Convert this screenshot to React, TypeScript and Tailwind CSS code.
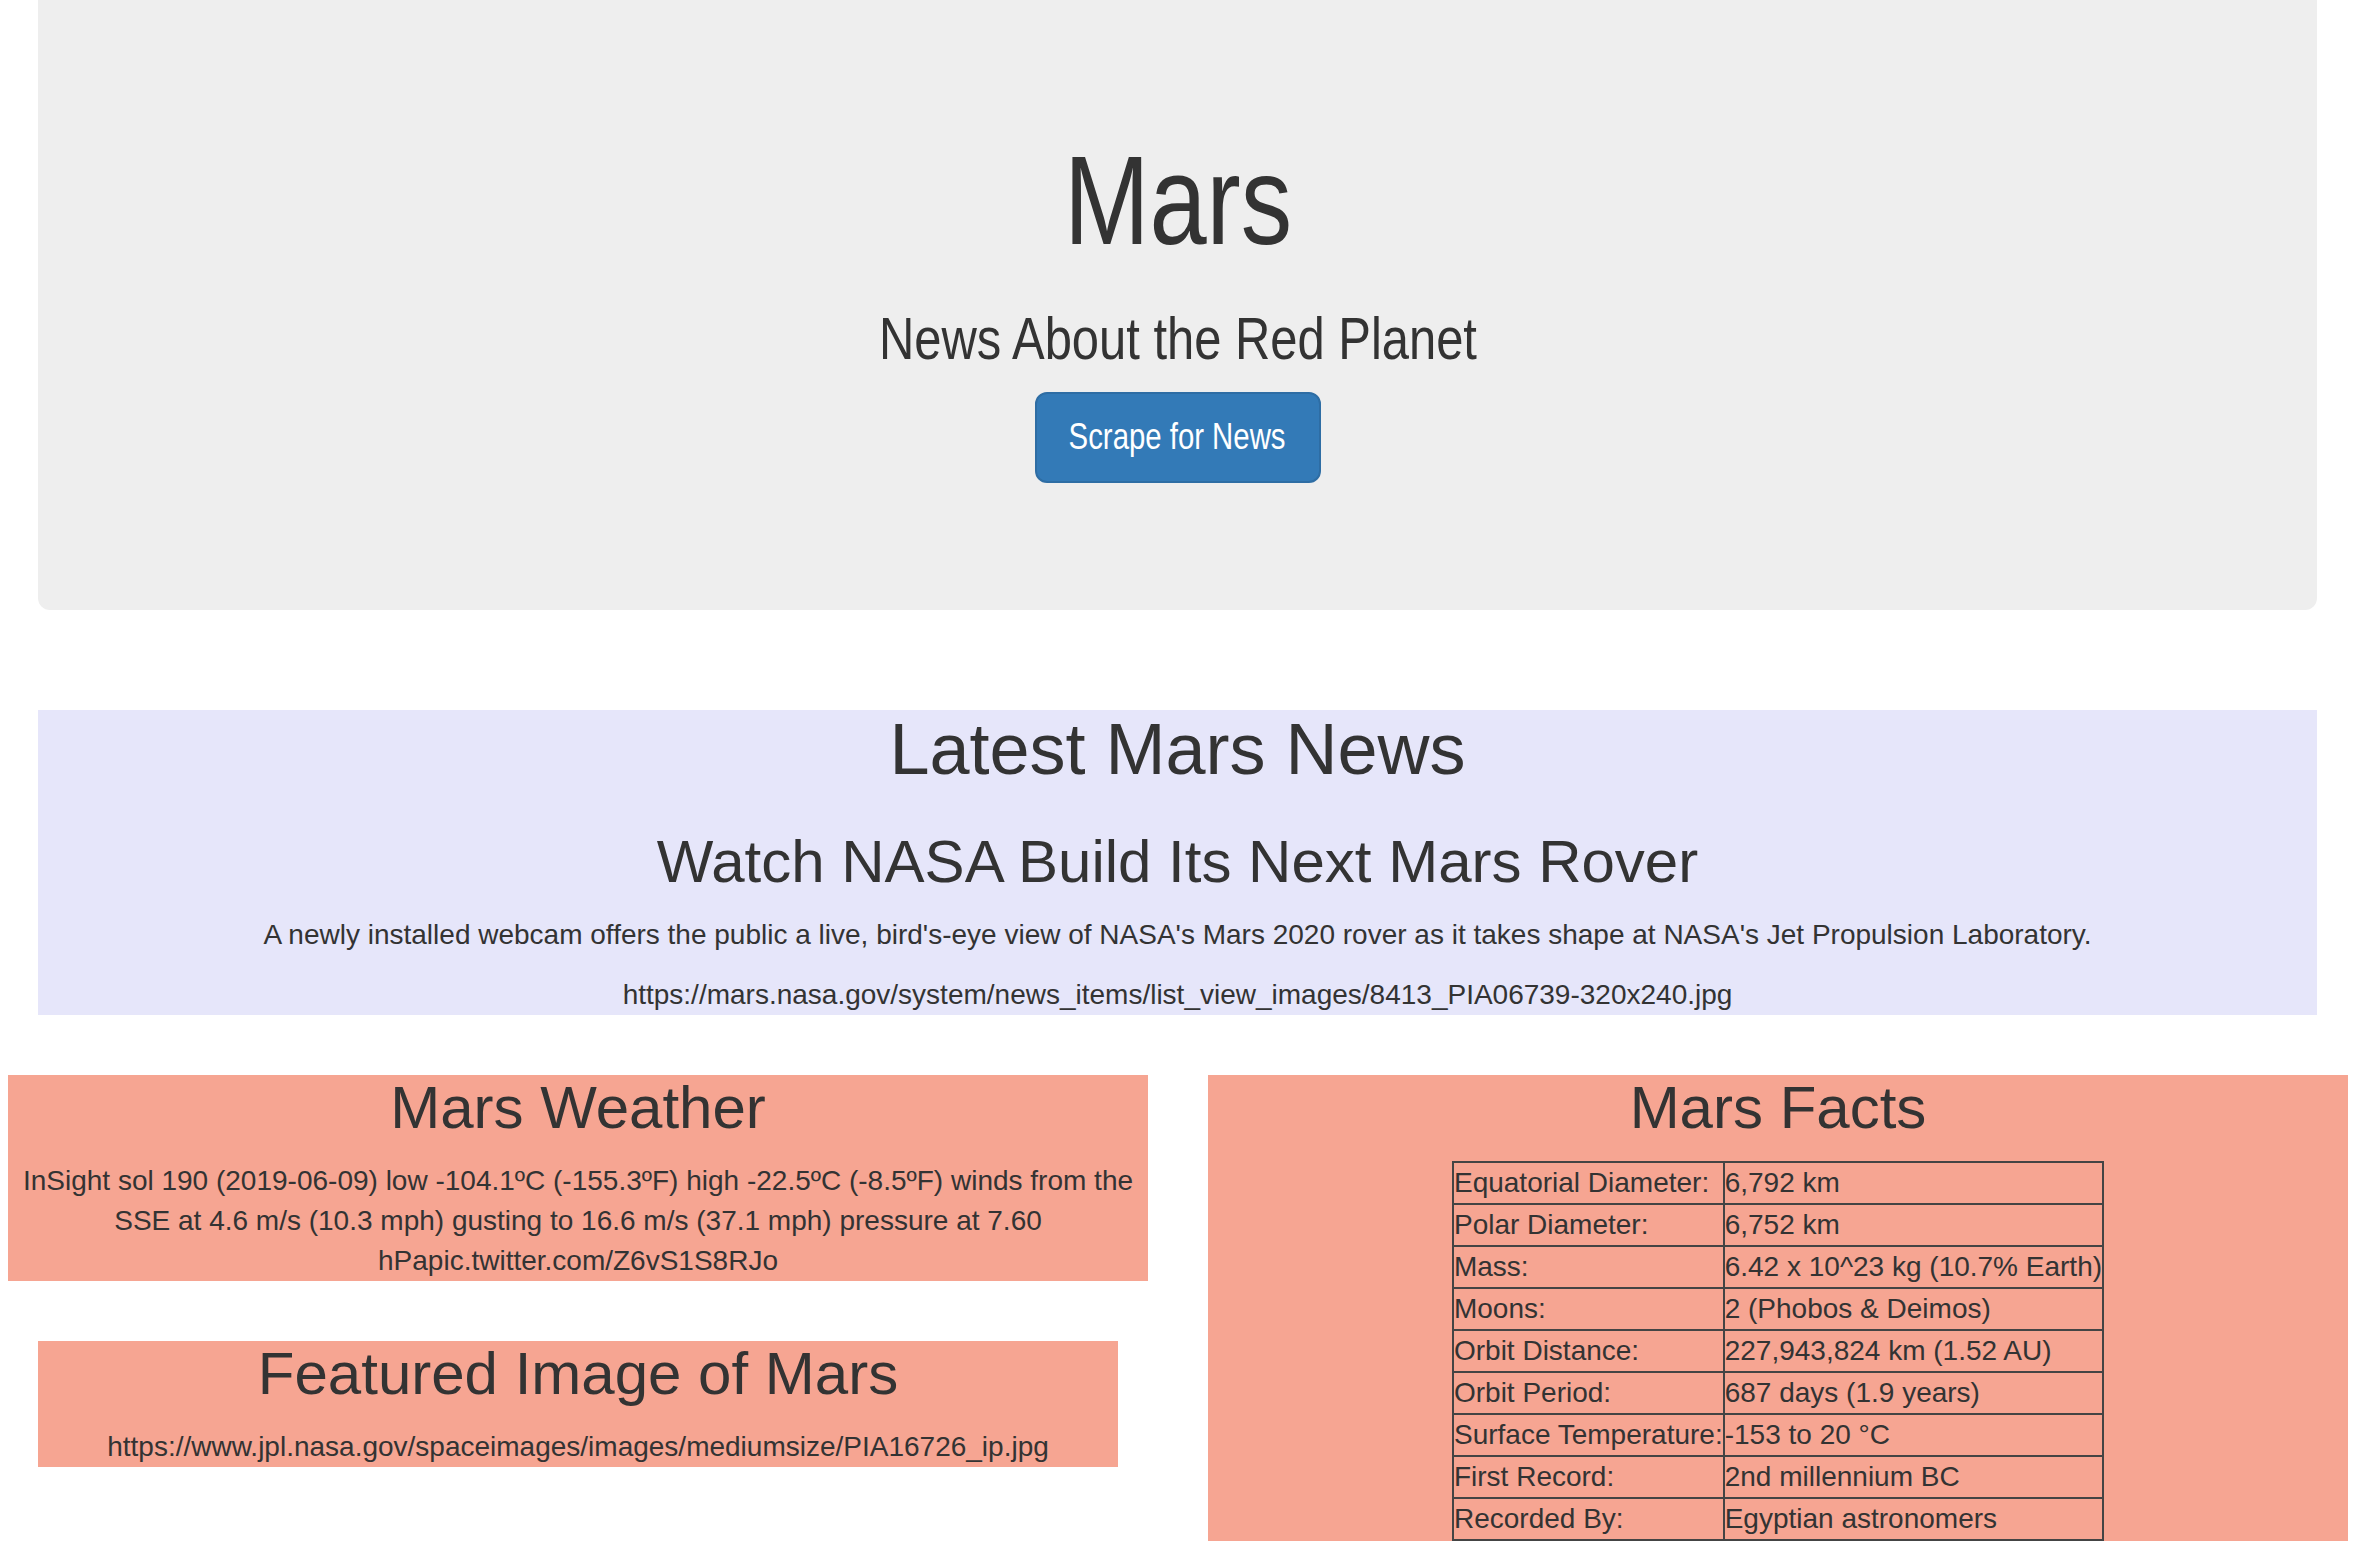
import React from "react";

const facts: [string, string][] = [
  ["Equatorial Diameter:", "6,792 km"],
  ["Polar Diameter:", "6,752 km"],
  ["Mass:", "6.42 x 10^23 kg (10.7% Earth)"],
  ["Moons:", "2 (Phobos & Deimos)"],
  ["Orbit Distance:", "227,943,824 km (1.52 AU)"],
  ["Orbit Period:", "687 days (1.9 years)"],
  ["Surface Temperature:", "-153 to 20 °C"],
  ["First Record:", "2nd millennium BC"],
  ["Recorded By:", "Egyptian astronomers"],
];

// no narrow face installed, so squeeze the regular one
const Narrow = ({ children }: { children: React.ReactNode }) => (
  <span className="inline-block scale-x-[0.815] whitespace-nowrap">{children}</span>
);

export default function App() {
  return (
    <div className="w-[2378px] min-h-[1552px] bg-white text-[#333] font-['Liberation_Sans',Arial,sans-serif] text-[28px] leading-[40px]">
      {/* Jumbotron */}
      <div className="ml-[38px] w-[2279px] h-[610px] bg-[#eeeeee] rounded-b-[12px] flex flex-col items-center text-center">
        <h1 className="mt-[132px] text-[126px] leading-[1.1] font-normal">
          <Narrow>Mars</Narrow>
        </h1>
        <h2 className="mt-[35px] text-[60px] leading-[1.1] font-normal">
          <Narrow>News About the Red Planet</Narrow>
        </h2>
        <button className="mt-[20px] w-[286px] h-[91px] bg-[#337ab7] border-2 border-[#2e6da4] rounded-[12px] text-white text-[36px] leading-[48px]">
          <Narrow>Scrape for News</Narrow>
        </button>
      </div>

      {/* Latest news */}
      <section className="mt-[100px] ml-[38px] w-[2279px] bg-[#e6e6fa] text-center">
        <h1 className="text-[72px] leading-[1.1] font-normal">Latest Mars News</h1>
        <h2 className="mt-[40px] text-[60px] leading-[1.1] font-normal">Watch NASA Build Its Next Mars Rover</h2>
        <p className="mt-[20px]">
          A newly installed webcam offers the public a live, bird's-eye view of NASA's Mars 2020 rover as it takes shape at NASA's Jet Propulsion Laboratory.
        </p>
        <p className="mt-[20px]">https://mars.nasa.gov/system/news_items/list_view_images/8413_PIA06739-320x240.jpg</p>
      </section>

      {/* Weather / images / facts */}
      <div className="mt-[60px] flex items-start">
        <div className="ml-[8px] w-[1140px] flex flex-col">
          <div className="bg-[#f6a592] text-center">
            <h2 className="text-[60px] leading-[1.1] font-normal">Mars Weather</h2>
            <p className="mt-[20px]">
              InSight sol 190 (2019-06-09) low -104.1ºC (-155.3ºF) high -22.5ºC (-8.5ºF) winds from the SSE at 4.6 m/s (10.3 mph) gusting to 16.6 m/s (37.1 mph) pressure at 7.60 hPapic.twitter.com/Z6vS1S8RJo
            </p>
          </div>
          <div className="mt-[60px] ml-[30px] w-[1080px] bg-[#f6a592] text-center">
            <h2 className="text-[60px] leading-[1.1] font-normal">Featured Image of Mars</h2>
            <p className="mt-[20px]">https://www.jpl.nasa.gov/spaceimages/images/mediumsize/PIA16726_ip.jpg</p>
          </div>
        </div>

        <div className="ml-[60px] w-[1140px] bg-[#f6a592] flex flex-col items-center">
          <h2 className="text-[60px] leading-[1.1] font-normal">Mars Facts</h2>
          <table className="mt-[20px] border-collapse border-2 border-[#444]">
            <tbody>
              {facts.map(([k, v]) => (
                <tr key={k}>
                  <td className="border-2 border-[#444] p-0 text-left align-middle whitespace-nowrap">{k}</td>
                  <td className="border-2 border-[#444] p-0 text-left align-middle whitespace-nowrap">{v}</td>
                </tr>
              ))}
            </tbody>
          </table>
        </div>
      </div>
    </div>
  );
}
